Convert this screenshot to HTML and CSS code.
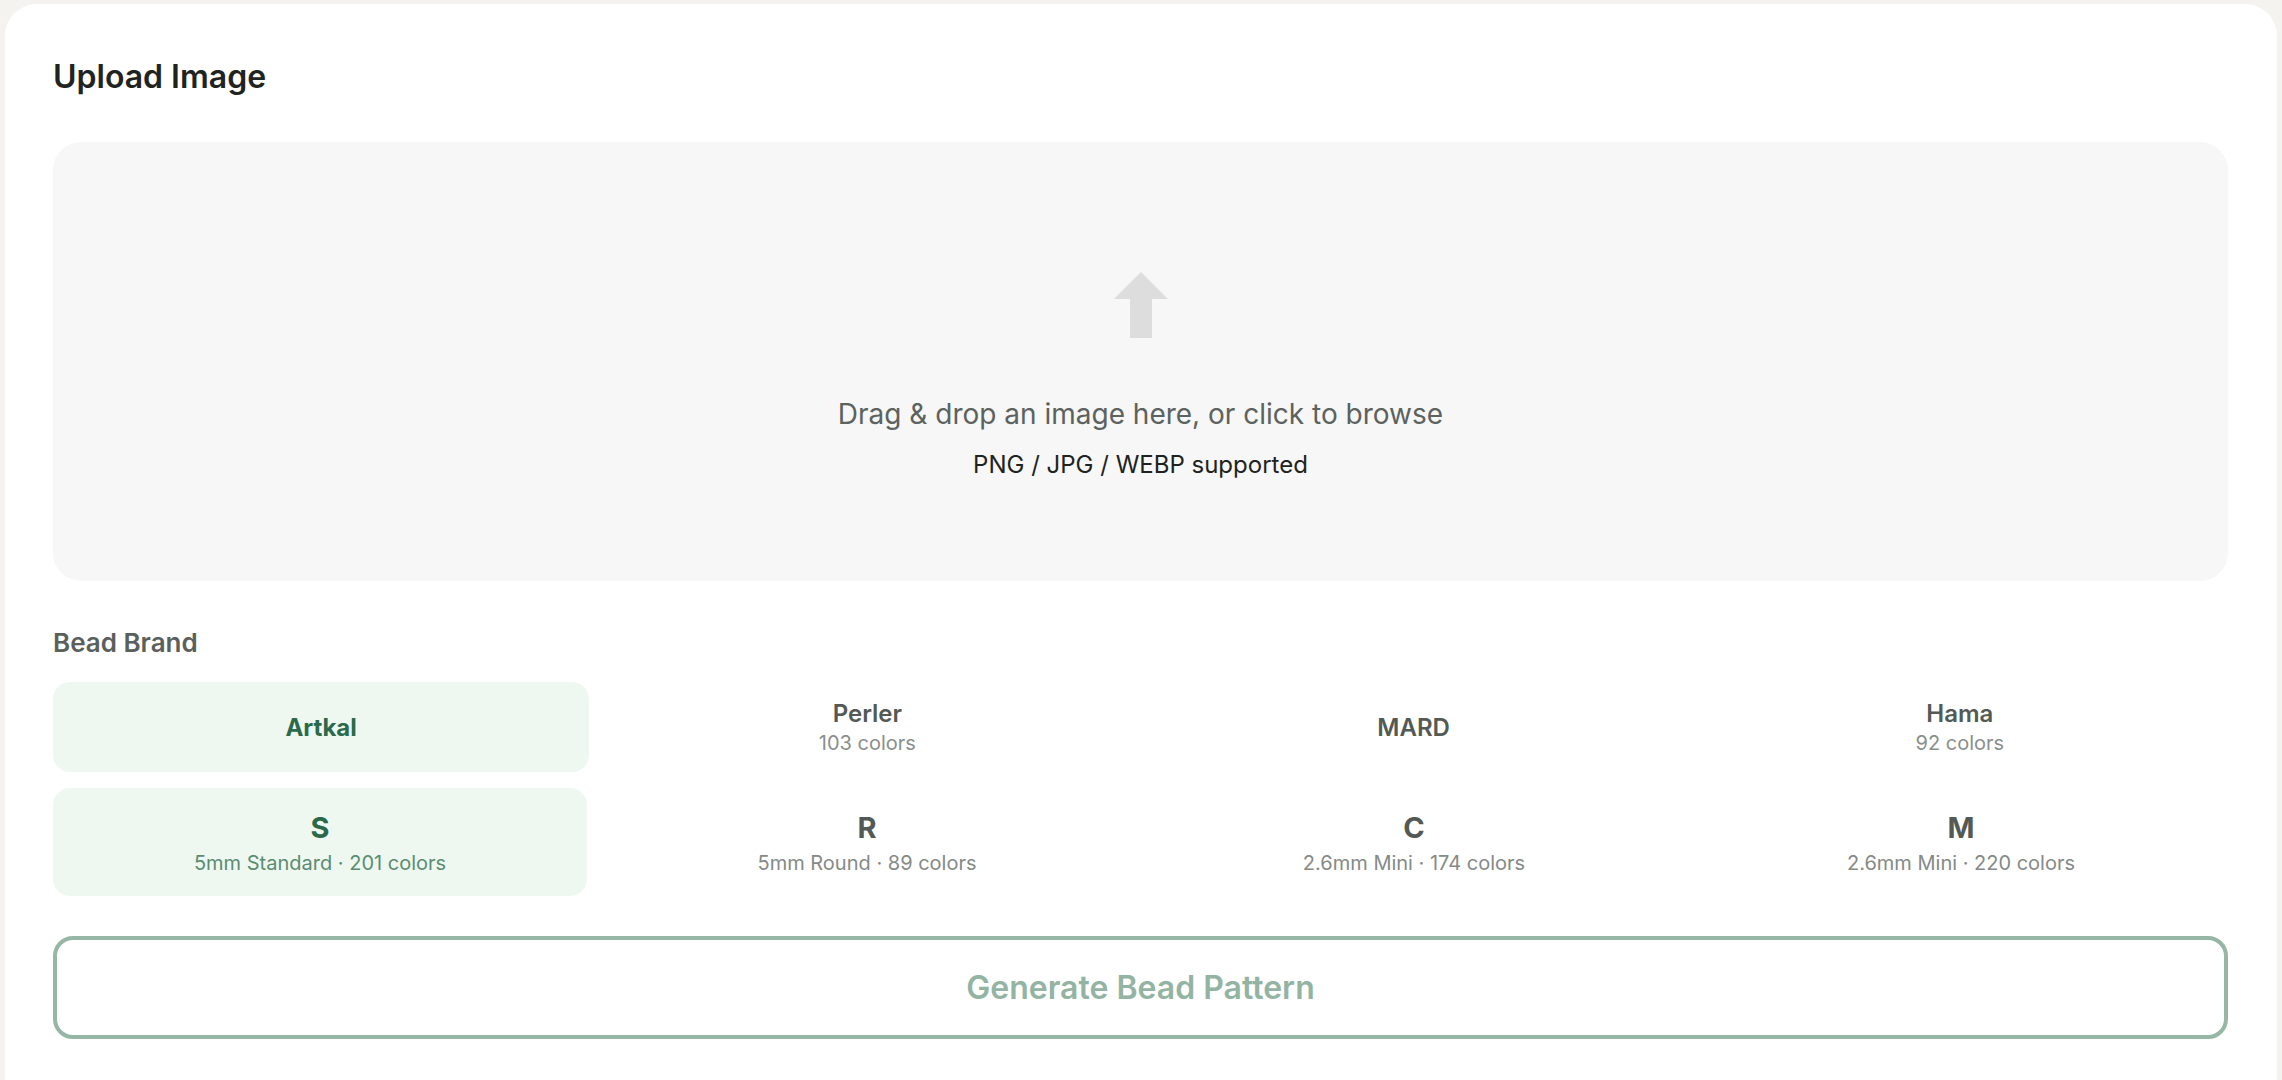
FILE: index.html
```html
<!DOCTYPE html>
<html lang="en">
<head>
<meta charset="utf-8">
<title>Upload Image</title>
<link rel="stylesheet" href="styles.css">
</head>
<body>
<main class="panel">
  <h2 class="panel-title">Upload Image</h2>

  <div class="dropzone">
    <svg class="upload-icon" width="54" height="66" viewBox="0 0 54 66" aria-hidden="true">
      <path d="M27 0 L54 27 L38 27 L38 66 L16 66 L16 27 L0 27 Z" fill="#dcdddc"/>
    </svg>
    <p class="drop-text">Drag &amp; drop an image here, or click to browse</p>
    <p class="drop-hint">PNG / JPG / WEBP supported</p>
  </div>

  <div class="field-label">Bead Brand</div>

  <div class="brand-grid">
    <button class="brand is-active"><span class="brand-name">Artkal</span></button>
    <button class="brand"><span class="brand-name">Perler</span><span class="brand-sub">103 colors</span></button>
    <button class="brand"><span class="brand-name">MARD</span></button>
    <button class="brand"><span class="brand-name">Hama</span><span class="brand-sub">92 colors</span></button>
  </div>

  <div class="series-grid">
    <button class="series is-active"><span class="series-code">S</span><span class="series-sub">5mm Standard · 201 colors</span></button>
    <button class="series"><span class="series-code">R</span><span class="series-sub">5mm Round · 89 colors</span></button>
    <button class="series"><span class="series-code">C</span><span class="series-sub">2.6mm Mini · 174 colors</span></button>
    <button class="series"><span class="series-code">M</span><span class="series-sub">2.6mm Mini · 220 colors</span></button>
  </div>

  <button class="generate" disabled>Generate Bead Pattern</button>
</main>
</body>
</html>
```

FILE: styles.css
```css
* { box-sizing: border-box; }

html, body {
  margin: 0;
  padding: 0;
  background: #f4f3ef;
  font-family: Inter, "Noto Sans", "Liberation Sans", sans-serif;
  overflow: hidden;
}

.panel {
  margin: 4px 5px 0 5px;
  min-height: 1200px;
  background: #ffffff;
  border-radius: 32px;
  padding: 54px 49px 0 48px;
}

.panel-title {
  margin: 0;
  font-size: 32px;
  line-height: 38px;
  font-weight: 600;
  color: #1f2421;
}

.dropzone {
  margin-top: 46px;
  height: 439px;
  background: #f6f7f6;
  border-radius: 28px;
  display: flex;
  flex-direction: column;
  align-items: center;
  padding-top: 130px;
}

.upload-icon { display: block; }

.drop-text {
  margin: 59px 0 0;
  font-size: 28px;
  line-height: 34px;
  color: #5c625f;
}

.drop-hint {
  margin: 19px 0 0;
  font-size: 24px;
  line-height: 29px;
  color: #1e2220;
}

.field-label {
  margin-top: 46px;
  font-size: 26px;
  line-height: 31px;
  font-weight: 600;
  color: #5a605c;
}

.brand-grid,
.series-grid {
  display: grid;
  grid-template-columns: repeat(4, 1fr);
}

.brand-grid {
  margin-top: 24px;
  gap: 10px;
}

.series-grid {
  margin-top: 16px;
  gap: 13px;
}

.brand,
.series {
  border: none;
  background: transparent;
  font-family: inherit;
  display: flex;
  flex-direction: column;
  align-items: center;
  justify-content: center;
  border-radius: 17px;
  padding: 0;
  cursor: pointer;
}

.brand { height: 90px; }
.series { height: 108px; }

.brand-name {
  font-size: 24px;
  line-height: 29px;
  font-weight: 600;
  color: #535a56;
}

.brand-sub {
  margin-top: 3px;
  font-size: 20px;
  line-height: 24px;
  color: #8a8f8c;
}

.series-code {
  font-size: 29px;
  line-height: 35px;
  font-weight: 700;
  color: #535a56;
}

.series-sub {
  margin-top: 6px;
  font-size: 20px;
  line-height: 24px;
  color: #858a87;
}

.is-active { background: #eef8f1; }
.brand.is-active .brand-name { color: #2a6a4a; font-weight: 700; }
.series.is-active .series-code { color: #2a6a4a; }
.series.is-active .series-sub { color: #5a8d70; }

.generate {
  display: block;
  width: 100%;
  margin-top: 40px;
  height: 103px;
  border: 4px solid #96b6a6;
  border-radius: 20px;
  background: #ffffff;
  font-family: inherit;
  font-size: 32px;
  font-weight: 600;
  color: #93b4a3;
}
```
